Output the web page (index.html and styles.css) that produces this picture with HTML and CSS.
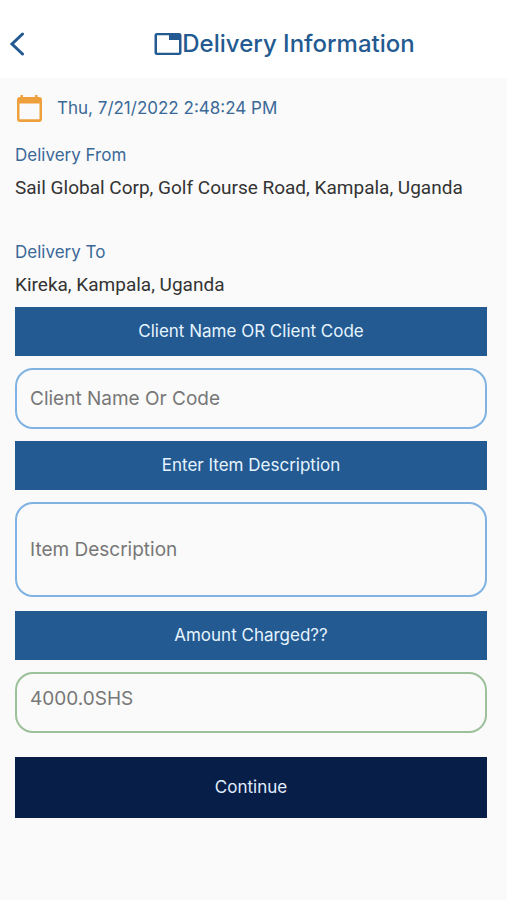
FILE: index.html
```html
<!DOCTYPE html>
<html lang="en">
<head>
<meta charset="utf-8">
<meta name="viewport" content="width=device-width, initial-scale=1">
<title>Delivery Information</title>
<link rel="stylesheet" href="styles.css">
</head>
<body>
<header class="topbar">
  <button class="back" type="button" aria-label="Back">
    <svg width="16" height="26" viewBox="0 0 16 26" fill="none" stroke="currentColor" stroke-width="3" stroke-linecap="round"><path d="M14.500 3 4 13l10.500 10"/></svg>
  </button>
  <h1 class="title">
    <svg width="28" height="24" viewBox="0 0 28 24" fill="currentColor" aria-hidden="true"><path fill-rule="evenodd" d="M3 1h22a2.500 2.500 0 0 1 2.500 2.500v17a2.500 2.500 0 0 1-2.500 2.500H3a2.500 2.500 0 0 1-2.500-2.500v-17A2.500 2.500 0 0 1 3 1Zm0 2.300v17.400h22V8H15V3.300Z"/></svg>
    <span>Delivery Information</span>
  </h1>
</header>
<main class="content">
  <div class="date">
    <svg width="28" height="28" viewBox="0 0 28 28" aria-hidden="true"><path fill="#eda03c" fill-rule="evenodd" d="M5.500 1H8v2h12V1h2.500v2H24a3 3 0 0 1 3 3v19a3 3 0 0 1-3 3H5a3 3 0 0 1-3-3V6a3 3 0 0 1 3-3h.5ZM4.500 9.500v15.800h20V9.500Z"/></svg>
    <time datetime="2022-07-21T14:48:24">Thu, 7/21/2022 2:48:24 PM</time>
  </div>
  <dl class="route">
    <div class="stop">
      <dt>Delivery From</dt>
      <dd>Sail Global Corp, Golf Course Road, Kampala, Uganda</dd>
    </div>
    <div class="stop">
      <dt>Delivery To</dt>
      <dd>Kireka, Kampala, Uganda</dd>
    </div>
  </dl>
  <form class="form">
    <div class="field">
      <label class="bar" for="client">Client Name OR Client Code</label>
      <input class="box" id="client" type="text" placeholder="Client Name Or Code">
    </div>
    <div class="field">
      <label class="bar" for="item">Enter Item Description</label>
      <input class="box box-tall" id="item" type="text" placeholder="Item Description">
    </div>
    <div class="field">
      <label class="bar" for="amount">Amount Charged??</label>
      <input class="box box-amount" id="amount" type="text" placeholder="4000.0SHS">
    </div>
    <button class="submit" type="submit">Continue</button>
  </form>
</main>
</body>
</html>
```
FILE: styles.css
```css
* {
  box-sizing: border-box;
}

body {
  margin: 0;
  min-height: 100vh;
  background: #fafafa;
  color: #235a91;
  font-family: Inter, "Liberation Sans", sans-serif;
}

.topbar {
  display: grid;
  grid-template-columns: 40px 1fr 40px;
  align-items: center;
  padding: 24px 0 14px;
  background: #fff;
}

.back {
  display: flex;
  padding: 0 0 0 8px;
  border: 0;
  background: none;
  color: #235a91;
}

.title {
  display: flex;
  align-items: center;
  justify-content: center;
  margin: 0;
  padding-left: 62px;
  font-size: 24px;
  font-weight: 500;
  line-height: 40px;
  white-space: nowrap;
}

.content {
  padding: 16px 20px 24px 15px;
}

.date {
  display: flex;
  align-items: center;
  gap: 14px;
  color: #3a6998;
  font-size: 17px;
  line-height: 28px;
}

.route {
  display: grid;
  gap: 35px;
  margin: 21px 0 5px;
}

.stop dt {
  color: #3a6998;
  font-size: 17px;
  line-height: 25px;
}

.stop dd {
  margin: 3px 0 0;
  color: #333;
  font-family: Roboto, "Liberation Sans", sans-serif;
  font-size: 19px;
  line-height: 34px;
}

.form {
  display: grid;
  gap: 12px;
}

.field {
  display: grid;
  gap: 12px;
}

.bar {
  background: #235a91;
  color: #e6f4ff;
  font-size: 17px;
  line-height: 49px;
  text-align: center;
}

.box {
  width: 100%;
  height: 61px;
  padding: 0 13px;
  border: 2px solid #80b2e2;
  border-radius: 18px;
  background: transparent;
  color: #333;
  font: 19px Inter, "Liberation Sans", sans-serif;
}

.box::placeholder {
  color: #777;
  opacity: 1;
}

.box-tall {
  height: 95px;
  margin-bottom: 2px;
}

.box-amount {
  padding-bottom: 8px;
  border-color: #9cc09a;
}

.submit {
  margin-top: 12px;
  padding: 0;
  border: 0;
  background: #071e48;
  color: #e0edff;
  font: 17px/61px Inter, "Liberation Sans", sans-serif;
}
```
